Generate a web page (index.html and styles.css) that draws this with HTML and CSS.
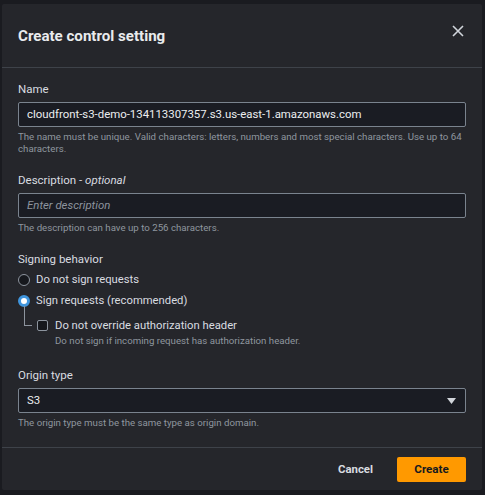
FILE: index.html
```html
<!DOCTYPE html>
<html lang="en">
<head>
<meta charset="utf-8">
<title>Create control setting</title>
<link rel="stylesheet" href="styles.css">
</head>
<body>
<div class="modal">
  <div class="header">
    <h2 class="title">Create control setting</h2>
    <button class="close" aria-label="Close">
      <svg width="12" height="12" viewBox="0 0 12 12"><path d="M1 1 L11 11 M11 1 L1 11" stroke="#d1d5db" stroke-width="1.6" fill="none"/></svg>
    </button>
  </div>
  <div class="content">
    <div class="field f-name">
      <div class="label">Name</div>
      <div class="input">cloudfront-s3-demo-134113307357.s3.us-east-1.amazonaws.com</div>
      <div class="hint">The name must be unique. Valid characters: letters, numbers and most special characters. Use up to 64 characters.</div>
    </div>
    <div class="field f-desc">
      <div class="label">Description - <i>optional</i></div>
      <div class="input placeholder">Enter description</div>
      <div class="hint">The description can have up to 256 characters.</div>
    </div>
    <div class="field f-sign">
      <div class="label">Signing behavior</div>
      <div class="radio-row"><span class="radio"></span><span>Do not sign requests</span></div>
      <div class="radio-row"><span class="radio checked"></span><span>Sign requests (recommended)</span></div>
      <div class="sub-row"><span class="connector"></span><span class="checkbox"></span><span>Do not override authorization header</span></div>
      <div class="hint sub-hint">Do not sign if incoming request has authorization header.</div>
    </div>
    <div class="field f-origin">
      <div class="label">Origin type</div>
      <div class="input select"><span>S3</span><svg width="9" height="6" viewBox="0 0 9 6"><path d="M0 0 H9 L4.5 6 Z" fill="#d1d5db"/></svg></div>
      <div class="hint">The origin type must be the same type as origin domain.</div>
    </div>
  </div>
  <div class="footer">
    <button class="btn-cancel">Cancel</button>
    <button class="btn-create">Create</button>
  </div>
</div>
</body>
</html>
```
FILE: styles.css
```css
* { box-sizing: border-box; }
html, body { margin: 0; padding: 0; }
body {
  background: #1a1b20;
  font-family: Roboto, "Open Sans", sans-serif;
  color: #d5d8dc;
  width: 485px;
  height: 495px;
  overflow: hidden;
}
.modal {
  margin: 4px 0 0 2px;
  width: 480px;
  height: 486px;
  background: #25262b;
  border-radius: 2px;
  display: flex;
  flex-direction: column;
}
.header {
  height: 64px;
  border-bottom: 1px solid #3e4249;
  display: flex;
  align-items: center;
  justify-content: space-between;
  padding: 0 18px 0 16px;
}
.title {
  margin: 0;
  font-size: 15.1px;
  font-weight: 700;
  color: #e9ebed;
}
.close {
  background: none;
  border: 0;
  padding: 0;
  width: 12px;
  height: 12px;
  margin-top: -9px;
  display: block;
}
.close svg { display: block; }
.content {
  padding: 11px 16px 0 16px;
  flex: 1;
  border-bottom: 1px solid #3e4249;
}
.label {
  font-size: 11.5px;
  line-height: 20px;
  height: 20px;
  color: #d9dce0;
}
.label i { font-style: italic; }
.input {
  margin-top: 3px;
  height: 25px;
  border: 1px solid #7a838e;
  border-radius: 2px;
  background: #1a1c23;
  padding: 0 8px;
  font-size: 11.4px;
  line-height: 23px;
  color: #eceef0;
  white-space: nowrap;
  overflow: hidden;
}
.input.placeholder { font-style: italic; color: #8d949e; }
.select {
  display: flex;
  align-items: center;
  justify-content: space-between;
  padding-right: 9px;
}
.select svg { display: block; }
.hint {
  margin-top: 4px;
  font-size: 9.7px;
  line-height: 12px;
  color: #8f969f;
}
.f-desc { margin-top: 15px; }
.f-sign { margin-top: 15px; }
.f-origin { margin-top: 18px; }
.radio-row {
  display: flex;
  align-items: center;
  height: 21px;
  font-size: 11.25px;
  color: #d9dce0;
}
.radio {
  width: 12px;
  height: 12px;
  border-radius: 50%;
  border: 1.5px solid #8d949e;
  background: #16181d;
  margin: 0 6px 0 0;
  flex: none;
}
.radio.checked {
  border: 3.5px solid #3f95dd;
  background: #ffffff;
}
.sub-row {
  display: flex;
  align-items: center;
  height: 19px;
  margin-top: 5px;
  font-size: 11.25px;
  color: #d9dce0;
}
.connector {
  align-self: flex-start;
  width: 8px;
  height: 20px;
  margin: -10px 0 0 6px;
  border-left: 1px solid #8d949e;
  border-bottom: 1px solid #8d949e;
  flex: none;
}
.checkbox {
  width: 11px;
  height: 11px;
  border: 1.5px solid #8d949e;
  border-radius: 2px;
  background: #16181d;
  margin: 0 7px 0 5px;
  flex: none;
}
.sub-hint { margin-top: 0; padding-left: 37px; }
.footer {
  height: 42px;
  display: flex;
  align-items: center;
  justify-content: flex-end;
  padding: 0 16px;
}
.btn-cancel {
  background: none;
  border: 0;
  font-family: inherit;
  font-weight: 700;
  font-size: 11.4px;
  color: #d9dce0;
  padding: 0;
  margin-right: 24px;
}
.btn-create {
  background: #f90;
  border: 0;
  border-radius: 2px;
  width: 69px;
  height: 25px;
  font-family: inherit;
  font-weight: 700;
  font-size: 11.6px;
  color: #16191f;
  padding: 0;
}
```
